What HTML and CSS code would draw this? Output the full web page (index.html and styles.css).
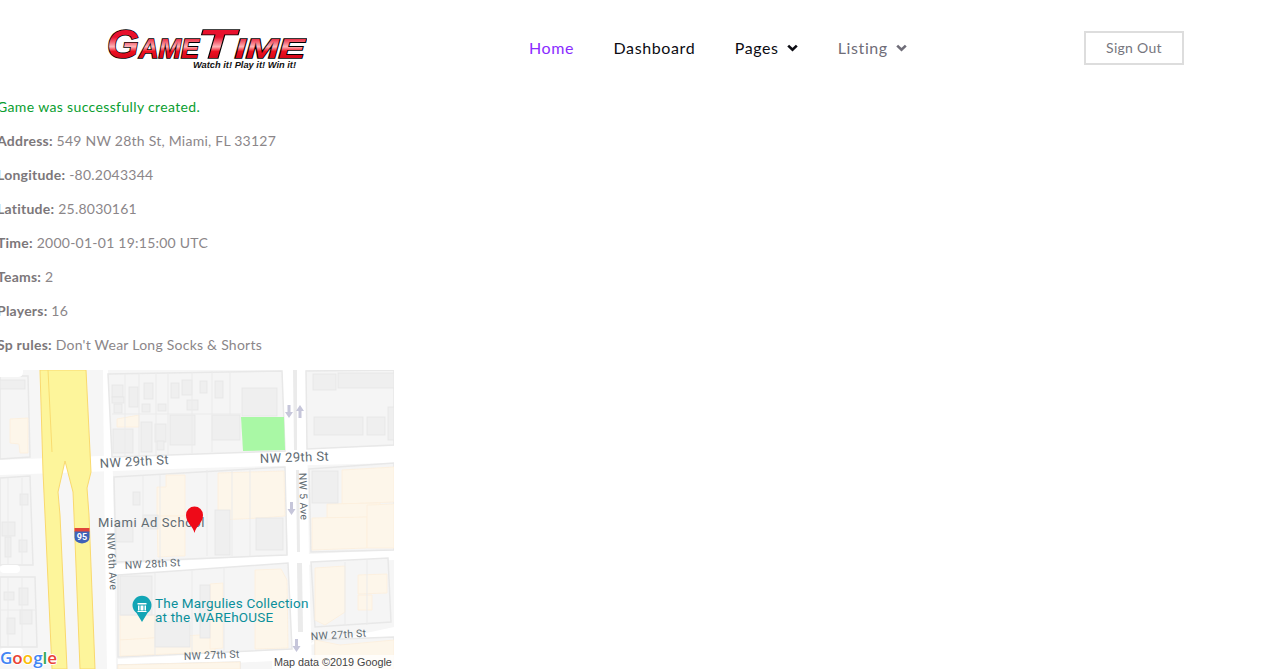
FILE: index.html
```html
<!DOCTYPE html>
<html lang="en">
<head>
<meta charset="utf-8">
<title>Game Time</title>
<link rel="stylesheet" href="styles.css">
</head>
<body>
<header class="site-header">
  <a class="logo" href="#" aria-label="Game Time">
    <svg width="202" height="44" viewBox="0 0 202 44">
      <defs>
        <linearGradient id="logoRed" x1="0" y1="0" x2="0" y2="1">
          <stop offset="0" stop-color="#e8112d"/>
          <stop offset="0.35" stop-color="#e8112d"/>
          <stop offset="0.56" stop-color="#ffb4b8"/>
          <stop offset="0.66" stop-color="#ee1020"/>
          <stop offset="1" stop-color="#b00012"/>
        </linearGradient>
      </defs>
      <g class="logo-word">
        <text x="2" y="32" textLength="92" lengthAdjust="spacingAndGlyphs"><tspan class="cap">G</tspan>AME</text>
        <text x="93" y="32" textLength="107" lengthAdjust="spacingAndGlyphs"><tspan class="cap">T</tspan>IME</text>
      </g>
      <text class="logo-tag" x="88" y="41.500" textLength="103" lengthAdjust="spacingAndGlyphs">Watch it! Play it! Win it!</text>
    </svg>
  </a>
  <nav class="main-nav">
    <a class="nav-link active" href="#">Home</a>
    <a class="nav-link" href="#">Dashboard</a>
    <a class="nav-link" href="#">Pages <svg class="chev" width="11" height="8" viewBox="0 0 11 8"><path d="M1.2 1.6 5.5 5.800 9.800 1.600"/></svg></a>
    <a class="nav-link muted" href="#">Listing <svg class="chev" width="11" height="8" viewBox="0 0 11 8"><path d="M1.2 1.6 5.5 5.800 9.800 1.600"/></svg></a>
  </nav>
  <a class="sign-out" href="#">Sign Out</a>
</header>
<main>
  <section class="details">
    <p class="notice">Game was successfully created.</p>
    <p><strong>Address:</strong> 549 NW 28th St, Miami, FL 33127</p>
    <p><strong>Longitude:</strong> -80.2043344</p>
    <p><strong>Latitude:</strong> 25.8030161</p>
    <p><strong>Time:</strong> 2000-01-01 19:15:00 UTC</p>
    <p><strong>Teams:</strong> 2</p>
    <p><strong>Players:</strong> 16</p>
    <p><strong>Sp rules:</strong> Don't Wear Long Socks &amp; Shorts</p>
  </section>
  <svg class="map" width="394" height="299" viewBox="0 370 394 299">
    <rect class="ground" x="0" y="370" width="394" height="299"/>

    <!-- roads -->
    <g class="road">
      <polygon points="0,460 200,452 394,446 394,463 200,468 0,475"/>
      <polygon points="114,564 288,555 394,550 394,560 288,566 116,576"/>
      <polygon points="118,659 292,649 394,627 394,638 315,640 292,660 118,669"/>
      <polygon points="103,370 108,370 113,476 116,669 107,669 104,476"/>
      <polygon points="282,370 306,370 309,560 312,669 293,669 288,560"/>
    </g>
    <polygon class="median" points="293,370 297,370 297,450 294,450"/>
    <polygon class="median" points="297,563 302,563 303,632 298,632"/>
    <polygon class="median" points="296,470 299,470 300,552 297,552"/>

    <!-- blocks -->
    <g class="block">
      <polygon points="0,376 28,376 30,457 0,459"/>
      <polygon points="0,478 30,476 33,565 0,565"/>
      <polygon points="0,577 35,577 37,647 0,647"/>
      <polygon points="108,374 282,371 285,451 112,457"/>
      <polygon points="306,371 394,370 394,445 307,449"/>
      <polygon points="114,477 285,467 287,555 116,562"/>
      <polygon points="309,469 394,463 394,550 311,552"/>
      <polygon points="118,575 288,563 292,649 118,657"/>
      <polygon points="311,562 388,558 391,622 315,627"/>
      <polygon points="118,665 240,662 240,669 118,669"/>
      <polygon points="315,640 394,637 394,669 315,669"/>
    </g>
    <g class="road">
      <rect x="0" y="565" width="20" height="8" rx="4"/>
      <rect x="0" y="648" width="23" height="7" rx="3.500"/>
      <path d="M0 370H23V372Q23 377 18 377H0Z"/>
    </g>

    <!-- beige land -->
    <g class="beige">
      <polygon points="10,419 28,418 28,453 20,453 19,444 10,443"/>
      <polygon points="117,419 139,415 139,427 117,427"/>
      <polygon points="157,487 166,487 166,475 185,475 185,516 157,516"/>
      <polygon points="157,516 185,516 185,556 175,556 158,557"/>
      <polygon points="218,473 284,471 285,516 260,518 218,520"/>
      <polygon points="342,470 394,467 394,502 342,504"/>
      <polygon points="327,504 380,503 380,517 327,518"/>
      <polygon points="312,518 367,517 367,548 312,550"/>
      <polygon points="367,505 394,504 394,548 367,548"/>
      <polygon points="120,615 155,615 155,638 120,640"/>
      <polygon points="120,640 215,634 215,652 120,656"/>
      <polygon points="210,584 223,583 223,648 210,649"/>
      <polygon points="255,570 281,569 287,580 288,648 255,649"/>
      <polygon points="315,568 345,566 345,612 325,625 315,620"/>
      <polygon points="358,575 387,574 387,593 358,594"/>
      <polygon points="358,595 372,595 372,610 358,610"/>
      <polygon points="315,640 340,645 394,640 394,669 315,669"/>
      <polygon points="118,665 240,662 240,669 118,669"/>
    </g>

    <!-- buildings -->
    <g class="bldg">
      <rect x="0" y="380" width="25" height="9"/>
      <rect x="112" y="385" width="11" height="12"/>
      <rect x="112" y="397" width="12" height="6"/>
      <rect x="114" y="404" width="8" height="9"/>
      <rect x="129" y="387" width="9" height="20"/>
      <rect x="144" y="383" width="9" height="16"/>
      <rect x="142" y="404" width="8" height="8"/>
      <rect x="158" y="404" width="8" height="7"/>
      <rect x="171" y="383" width="8" height="15"/>
      <rect x="182" y="380" width="10" height="15"/>
      <rect x="187" y="400" width="11" height="10"/>
      <rect x="113" y="429" width="20" height="24"/>
      <rect x="141" y="422" width="11" height="30"/>
      <rect x="155" y="424" width="11" height="18"/>
      <rect x="157" y="441" width="7" height="9"/>
      <rect x="170" y="415" width="25" height="30"/>
      <rect x="200" y="381" width="7" height="12"/>
      <rect x="215" y="381" width="8" height="17"/>
      <rect x="242" y="388" width="35" height="28"/>
      <rect x="212" y="415" width="28" height="25"/>
      <rect x="313" y="374" width="23" height="16"/>
      <rect x="338" y="373" width="56" height="15"/>
      <rect x="314" y="417" width="49" height="18"/>
      <rect x="367" y="417" width="18" height="18"/>
      <rect x="388" y="407" width="6" height="33"/>
      <rect x="133" y="492" width="7" height="13"/>
      <rect x="20" y="494" width="8" height="11"/>
      <rect x="2" y="522" width="13" height="14"/>
      <rect x="5" y="537" width="6" height="20"/>
      <rect x="19" y="540" width="8" height="12"/>
      <rect x="4" y="592" width="10" height="8"/>
      <rect x="19" y="588" width="9" height="17"/>
      <rect x="7" y="618" width="8" height="16"/>
      <rect x="20" y="610" width="12" height="14"/>
      <rect x="116" y="522" width="17" height="20"/>
      <rect x="143" y="515" width="15" height="14"/>
      <rect x="215" y="510" width="15" height="45"/>
      <rect x="256" y="518" width="27" height="32"/>
      <rect x="312" y="471" width="26" height="32"/>
      <rect x="120" y="576" width="32" height="39"/>
      <rect x="155" y="622" width="35" height="25"/>
      <rect x="200" y="585" width="10" height="53"/>
    </g>
    <g class="grid-line">
      <path d="M125 374V456M139 373V455M156 373V455M168 372V454M192 372V453M212 371V452M230 371V416M112 414H241"/>
      <path d="M143 476V560M160 475V560M207 470V556M232 470V556M250 469V556"/>
      <path d="M155 573V656M192 570V654M224 568V652M120 615H190"/>
      <path d="M8 576V646M22 576V646M0 610H35M8 478V565M22 478V565"/>
      <path d="M367 560V625M345 562V625"/>
    </g>
    <polygon class="park" points="241,417 284,417 285,450 243,451"/>

    <!-- highway -->
    <path class="highway" d="M40 370H86L91 472 87 488 89 515 95 669H80L74 515 73 492 65 461 58 492 60 515 67 669H52L45 515 43 472Z"/>
    <path class="highway-line" d="M48 370 52 452"/>

    <!-- one-way arrows -->
    <g class="arrow">
      <path d="M287.500 405h3v7h2.500l-4 6-4-6h2.500z"/>
      <path d="M298.500 418h3v-7h2.500l-4-6-4 6h2.500z"/>
      <path d="M290 502h3v7h2.500l-4 6-4-6h2.500z"/>
      <path d="M295 639h3v7h2.500l-4 6-4-6h2.500z"/>
    </g>

    <!-- labels -->
    <g class="label">
      <text x="100" y="468" transform="rotate(-3.300 100 468)">NW 29th St</text>
      <text x="260" y="463" transform="rotate(-2 260 463)">NW 29th St</text>
    </g>
    <g class="label small">
      <text x="125" y="569" transform="rotate(-3 125 569)">NW 28th St</text>
      <text x="184" y="660" transform="rotate(-2.500 184 660)">NW 27th St</text>
      <text x="311" y="640" transform="rotate(-3.500 311 640)">NW 27th St</text>
      <text x="299" y="473" transform="rotate(88 299 473)">NW 5 Ave</text>
      <text x="107" y="533" transform="rotate(87 107 533)">NW 6th Ave</text>
    </g>
    <text class="label place" x="98" y="527">Miami Ad School</text>

    <!-- interstate shield -->
    <path class="shield-top" d="M74.500 528h15v4h-15z"/>
    <path class="shield" d="M74.500 531.500h15v6q0 5-7.500 6-7.500-1-7.500-6z"/>
    <text class="shield-text" x="82" y="540">95</text>

    <!-- POI -->
    <path class="poi" d="M142 622 136.500 613a9.500 9.500 0 1 1 11 0z"/>
    <path class="poi-icon" d="M137.500 603h9v1.500h-9zM138 605.500h1.500v5H138zM144.500 605.500h1.500v5h-1.500zM140.500 605.500h3v5h-3zM137.500 611h9v1h-9z"/>
    <text class="poi-text" x="155" y="608">The Margulies Collection</text>
    <text class="poi-text" x="155" y="622">at the WAREhOUSE</text>

    <!-- pin -->
    <path class="pin" d="M194.500 533C193 526 186 523 186 515a8.500 8.500 0 0 1 17 0C203 523 196 526 194.500 533Z"/>

    <!-- attribution -->
    <rect class="attr-bg" x="272" y="655" width="122" height="14"/>
    <text class="attr" x="274" y="666">Map data ©2019 Google</text>
    <text class="google" x="0" y="664"><tspan fill="#4285f4">G</tspan><tspan fill="#ea4335">o</tspan><tspan fill="#fbbc05">o</tspan><tspan fill="#4285f4">g</tspan><tspan fill="#34a853">l</tspan><tspan fill="#ea4335">e</tspan></text>
  </svg>
</main>
</body>
</html>
```

FILE: styles.css
```css
* { box-sizing: border-box; }

html, body {
  margin: 0;
  padding: 0;
  height: 669px;
  overflow: hidden;
  background: #fff;
  font-family: "Lato", "Open Sans", sans-serif;
}

a { text-decoration: none; color: inherit; }

.site-header {
  display: flex;
  align-items: center;
  height: 95px;
  padding: 0 82px 0 105px;
}

.logo { display: block; width: 202px; height: 44px; }
.logo svg { display: block; }

.logo-word text {
  font-family: "Liberation Sans", sans-serif;
  font-weight: 700;
  font-style: italic;
  font-size: 27px;
  fill: url(#logoRed);
  stroke: #000;
  stroke-width: 1.600px;
  paint-order: stroke;
}
.logo-word .cap { font-size: 41px; }

.logo-tag {
  font-family: "Liberation Sans", sans-serif;
  font-weight: 700;
  font-style: italic;
  font-size: 9px;
  fill: #111;
}

.main-nav {
  display: flex;
  align-items: center;
  gap: 39.500px;
  margin-left: 222px;
  font-size: 16px;
}

.nav-link {
  color: #0b0b12;
  letter-spacing: 0.6px;
  white-space: nowrap;
}
.nav-link.active { color: #8a2bff; }
.nav-link.muted { color: #6f6d78; }

.chev {
  margin-left: 4px;
  vertical-align: 2px;
  fill: none;
  stroke: currentColor;
  stroke-width: 2.600;
}

.sign-out {
  display: flex;
  align-items: center;
  justify-content: center;
  width: 100px;
  height: 34px;
  margin-left: auto;
  border: 2px solid #ddd;
  color: #76767e;
  font-size: 14px;
  letter-spacing: 0.3px;
}

.details {
  margin: 0 0 0 -3px;
  padding-bottom: 3px;
  font-size: 14px;
  line-height: 24px;
  color: #8b8689;
  letter-spacing: 0.24px;
}
.details p { margin: 0 0 10px; white-space: nowrap; }
.details strong { font-weight: 700; color: #7c777a; }
.details .notice { color: #0a9e30; letter-spacing: 0.36px; }

.map { display: block; }

.ground { fill: #f6f6f6; }
.road { fill: #fff; }
.median { fill: #ebebeb; }
.block polygon { fill: #f5f5f5; stroke: #e8e8e8; stroke-width: 1.500; }
.beige polygon { fill: #fdf6ea; stroke: #fcefdc; stroke-width: 0.800; }
.bldg rect { fill: #efefef; stroke: #e6e6e6; stroke-width: 0.800; }
.grid-line path { fill: none; stroke: #ebebeb; stroke-width: 1; }
.park { fill: #a9f8a5; }
.highway { fill: #fdf59b; stroke: #f9d96e; stroke-width: 1; }
.highway-line { fill: none; stroke: #f9dc70; stroke-width: 1; }
.arrow path { fill: #c6c6da; }

.label text, .label.place {
  font-family: "Roboto", sans-serif;
  font-size: 13px;
  fill: #5f6b72;
  letter-spacing: 0.4px;
}
.label.small text { font-size: 10.500px; letter-spacing: 0.3px; }
.label.place { font-size: 13px; letter-spacing: 0.6px; }

.shield-top { fill: #e0453a; }
.shield { fill: #3f62b8; }
.shield-text {
  font-family: "Roboto", sans-serif;
  font-weight: 700;
  font-size: 9px;
  fill: #fff;
  text-anchor: middle;
}

.poi { fill: #12a5b5; }
.poi-icon { fill: #fff; }
.poi-text {
  font-family: "Roboto", sans-serif;
  font-size: 13.500px;
  fill: #0b8f9b;
  letter-spacing: 0.2px;
}

.pin { fill: #ee0a18; }

.attr-bg { fill: #fff; fill-opacity: 0.75; }
.attr {
  font-family: "Liberation Sans", sans-serif;
  font-size: 10.800px;
  fill: #444;
}

.google {
  font-family: "Open Sans", sans-serif;
  font-size: 17px;
  font-weight: 600;
  stroke: #fff;
  stroke-width: 2px;
  paint-order: stroke;
}
```
